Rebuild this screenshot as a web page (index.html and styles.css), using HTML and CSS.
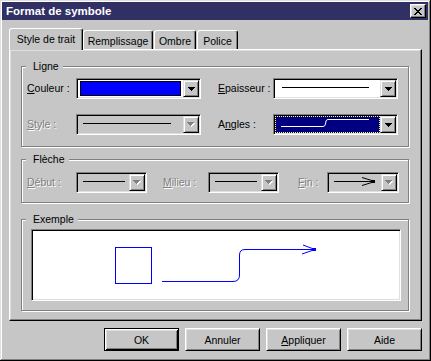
FILE: index.html
```html
<!DOCTYPE html>
<html lang="fr">
  <head>
    <meta charset="UTF-8" />
    <title>Format de symbole</title>
    <link rel="stylesheet" href="styles.css">
  </head>
  <body>
    <!-- fenetre de dialogue -->
    <div class="window">
      <div class="titlebar">
        <span class="title">Format de symbole</span>
        <span class="close">
          <svg width="8" height="7" viewBox="0 0 8 7"><path d="M0 0h2v1H0z M6 0h2v1H6z M1 1h2v1H1z M5 1h2v1H5z M2 2h4v1H2z M3 3h2v1H3z M2 4h4v1H2z M1 5h2v1H1z M5 5h2v1H5z M0 6h2v1H0z M6 6h2v1H6z" fill="#000"/></svg>
        </span>
      </div>

      <!-- onglets -->
      <div class="tabs">
        <div class="tab active">Style de trait</div>
        <div class="tab w-rempl">Remplissage</div>
        <div class="tab w-ombre">Ombre</div>
        <div class="tab w-police">Police</div>
      </div>

      <div class="panel">
        <!-- Ligne -->
        <div class="group ligne">
          <span class="legend">Ligne</span>
          <div class="grid">
            <label><u>C</u>ouleur :</label>
            <div class="combo">
              <div class="field"><span class="swatch"></span></div>
              <span class="drop"><svg width="7" height="4"><path d="M0 0h7v1H0z M1 1h5v1H1z M2 2h3v1H2z M3 3h1v1H3z"/></svg></span>
            </div>
            <label class="right"><u>E</u>paisseur :</label>
            <div class="combo">
              <div class="field"><svg width="105" height="17"><path d="M7 7.5H94" stroke="#000"/></svg></div>
              <span class="drop"><svg width="7" height="4"><path d="M0 0h7v1H0z M1 1h5v1H1z M2 2h3v1H2z M3 3h1v1H3z"/></svg></span>
            </div>

            <label class="off"><u>S</u>tyle :</label>
            <div class="combo disabled">
              <div class="field"><svg width="105" height="17"><path d="M5 7.5H93" stroke="#000"/></svg></div>
              <span class="drop"><svg width="8" height="5"><path d="M1 1h7v1H1z M2 2h5v1H2z M3 3h3v1H3z M4 4h1v1H4z" fill="#fff"/><path d="M0 0h7v1H0z M1 1h5v1H1z M2 2h3v1H2z M3 3h1v1H3z" fill="#808080"/></svg></span>
            </div>
            <label class="right">A<u>n</u>gles :</label>
            <div class="combo">
              <div class="field focus"><svg width="103" height="15"><path d="M5 9.5H47Q49 9.5 49.5 7L50 4Q50.5 2.5 52 2.5H93" stroke="#fff" fill="none"/></svg></div>
              <span class="drop"><svg width="7" height="4"><path d="M0 0h7v1H0z M1 1h5v1H1z M2 2h3v1H2z M3 3h1v1H3z"/></svg></span>
            </div>
          </div>
        </div>

        <!-- Fleche -->
        <div class="group fleche">
          <span class="legend">Flèche</span>
          <label class="off l-debut"><u>D</u>ébut :</label>
          <div class="combo disabled w-small">
            <div class="field"><svg width="51" height="17"><path d="M5 7.5H47" stroke="#000"/></svg></div>
            <span class="drop"><svg width="8" height="5"><path d="M1 1h7v1H1z M2 2h5v1H2z M3 3h3v1H3z M4 4h1v1H4z" fill="#fff"/><path d="M0 0h7v1H0z M1 1h5v1H1z M2 2h3v1H2z M3 3h1v1H3z" fill="#808080"/></svg></span>
          </div>
          <label class="off l-milieu"><u>M</u>ilieu :</label>
          <div class="combo disabled w-small">
            <div class="field"><svg width="51" height="17"><path d="M5 7.5H47" stroke="#000"/></svg></div>
            <span class="drop"><svg width="8" height="5"><path d="M1 1h7v1H1z M2 2h5v1H2z M3 3h3v1H3z M4 4h1v1H4z" fill="#fff"/><path d="M0 0h7v1H0z M1 1h5v1H1z M2 2h3v1H2z M3 3h1v1H3z" fill="#808080"/></svg></span>
          </div>
          <label class="off l-fin"><u>F</u>in :</label>
          <div class="combo disabled w-fin">
            <div class="field"><svg width="52" height="17"><path d="M5 7.5H46M33 3.5L46 7.5M33 11.5L46 7.5" stroke="#000" fill="none"/><rect x="42" y="6" width="4" height="3" fill="#000"/></svg></div>
            <span class="drop"><svg width="8" height="5"><path d="M1 1h7v1H1z M2 2h5v1H2z M3 3h3v1H3z M4 4h1v1H4z" fill="#fff"/><path d="M0 0h7v1H0z M1 1h5v1H1z M2 2h3v1H2z M3 3h1v1H3z" fill="#808080"/></svg></span>
          </div>
        </div>

        <!-- Exemple -->
        <div class="group exemple">
          <span class="legend">Exemple</span>
          <div class="preview">
            <svg width="366" height="68" viewBox="0 0 366 68">
              <rect x="82.5" y="16.5" width="36" height="36" fill="none" stroke="#0000ff"/>
              <path d="M129 50.5H200Q206.5 50.5 206.5 44V24Q206.5 18.5 212 18.5H282" fill="none" stroke="#0000ff"/>
              <path d="M270 14L282 18.5M269 23L282 18.5" fill="none" stroke="#0000ff"/>
              <rect x="279" y="17" width="4" height="3" fill="#0000ff"/>
            </svg>
          </div>
        </div>
      </div>

      <!-- boutons -->
      <div class="buttons">
        <span class="btn default">OK</span>
        <span class="btn">Annuler</span>
        <span class="btn"><u>A</u>ppliquer</span>
        <span class="btn">Aide</span>
      </div>
    </div>
  </body>
</html>
```

FILE: styles.css
```css
/* init */
* {
  box-sizing: border-box;
}
html,
body {
  margin: 0;
  padding: 0;
}
body {
  font-family: "Liberation Sans", Arial, sans-serif;
  font-size: 10.5px;
  color: #000;
  background-color: #c6c6c6;
}
u {
  text-decoration: underline;
  text-underline-offset: 1px;
}

/* fenetre */
.window {
  width: 431px;
  height: 361px;
  padding: 2px 3px 3px 2px;
  background-color: #c6c6c6;
  box-shadow: inset -1px -1px #000, inset 1px 1px #dfdfdf,
    inset -2px -2px #808080, inset 2px 2px #fff;
}

/* barre de titre */
.titlebar {
  display: flex;
  align-items: center;
  justify-content: space-between;
  height: 18px;
  padding: 0 2px 0 4px;
  background-color: #303064;
}
.title {
  color: #fff;
  font-weight: bold;
  font-size: 11.5px;
}
.close {
  display: flex;
  align-items: center;
  justify-content: center;
  width: 16px;
  height: 14px;
  background-color: #c6c6c6;
  border: 1px solid;
  border-color: #fff #000 #000 #fff;
  box-shadow: inset -1px -1px #808080, inset 1px 1px #dfdfdf;
}

/* onglets */
.tabs {
  display: flex;
  align-items: flex-end;
  height: 21px;
  margin-top: 8px;
  padding-left: 7px;
}
.tab {
  display: flex;
  align-items: center;
  justify-content: center;
  height: 19px;
  padding-top: 1px;
  background-color: #c6c6c6;
  border: 1px solid;
  border-bottom: 0;
  border-color: #fff #000 #000 #fff;
  border-radius: 3px 3px 0 0;
  box-shadow: inset -1px 0 #808080;
  white-space: nowrap;
}
.tab.active {
  position: relative; /* passe au dessus du bord du panneau */
  z-index: 1;
  width: 74px;
  height: 22px;
  margin-bottom: -1px;
  padding-top: 0;
  padding-bottom: 1px;
}
.w-rempl {
  width: 70px;
}
.w-ombre {
  width: 42px;
  margin-left: 1px;
}
.w-police {
  width: 41px;
  margin-left: 1px;
}

/* panneau */
.panel {
  width: 413px;
  height: 272px;
  margin-left: 7px;
  padding: 16px 11px 0 11px;
  border: 1px solid;
  border-color: #fff #000 #000 #fff;
  box-shadow: inset -1px -1px #808080, inset 1px 1px #dfdfdf;
}

/* cadres groupes */
.group {
  position: relative;
  width: 388px;
  border: 1px solid #808080;
  box-shadow: inset 1px 1px #fff, 1px 1px #fff;
}
.legend {
  position: absolute;
  top: -7px;
  left: 4px;
  padding: 0 4px 0 7px;
  line-height: 13px;
  background-color: #c6c6c6;
}

.ligne {
  height: 81px;
  padding: 11px 0 0 5px;
}
.grid {
  display: grid;
  grid-template-columns: 49px 125px 72px 125px;
  row-gap: 15px;
}
label {
  line-height: 21px;
  white-space: nowrap;
}
.grid .right {
  padding-left: 17px;
}
.off {
  color: #808080;
  text-shadow: 1px 1px #fff;
}

.fleche {
  display: flex;
  align-items: flex-start;
  height: 44px;
  margin-top: 12px;
  padding: 12px 0 0 5px;
}
.l-debut {
  width: 49px;
}
.l-milieu {
  width: 45px;
  margin-left: 16px;
}
.l-fin {
  width: 29px;
  margin-left: 19px;
}

.exemple {
  height: 92px;
  margin-top: 16px;
  padding: 9px 0 0 9px;
}
.preview {
  width: 370px;
  height: 72px;
  padding: 1px;
  background-color: #fff;
  border: 1px solid;
  border-color: #808080 #fff #fff #808080;
  box-shadow: inset 1px 1px #000, inset -1px -1px #dfdfdf;
}
.preview svg {
  display: block;
}

/* liste deroulante */
.combo {
  display: flex;
  width: 125px;
  height: 21px;
  padding: 1px;
  border: 1px solid;
  border-color: #808080 #fff #fff #808080;
  box-shadow: inset 1px 1px #000, inset -1px -1px #dfdfdf;
}
.combo.w-small {
  width: 71px;
}
.combo.w-fin {
  width: 72px;
}
.field {
  flex: 1;
  height: 17px;
  background-color: #fff;
}
.field svg {
  display: block;
}
.combo.disabled .field {
  background-color: #c6c6c6;
}
.field.focus {
  padding: 1px;
  background-color: #000080;
  outline: 1px dotted #ffff60;
  outline-offset: -1px;
}
.swatch {
  display: block;
  height: 15px;
  margin: 1px 2px;
  background-color: #0000ff;
  border: 1px solid #000;
}
.drop {
  display: flex;
  align-items: center;
  justify-content: center;
  width: 16px;
  height: 17px;
  background-color: #c6c6c6;
  border: 1px solid;
  border-color: #dfdfdf #000 #000 #dfdfdf;
  box-shadow: inset 1px 1px #fff, inset -1px -1px #808080;
}
.drop svg {
  display: block;
}

/* boutons */
.buttons {
  display: flex;
  justify-content: flex-end;
  gap: 6px;
  margin-top: 7px;
  padding-right: 6px;
}
.btn {
  display: flex;
  align-items: center;
  justify-content: center;
  width: 75px;
  height: 23px;
  border: 1px solid;
  border-color: #fff #000 #000 #fff;
  box-shadow: inset 1px 1px #dfdfdf, inset -1px -1px #808080;
}
.btn.default {
  border-color: #000;
  box-shadow: inset 1px 1px #fff, inset -1px -1px #000,
    inset 2px 2px #dfdfdf, inset -2px -2px #808080;
}
```
